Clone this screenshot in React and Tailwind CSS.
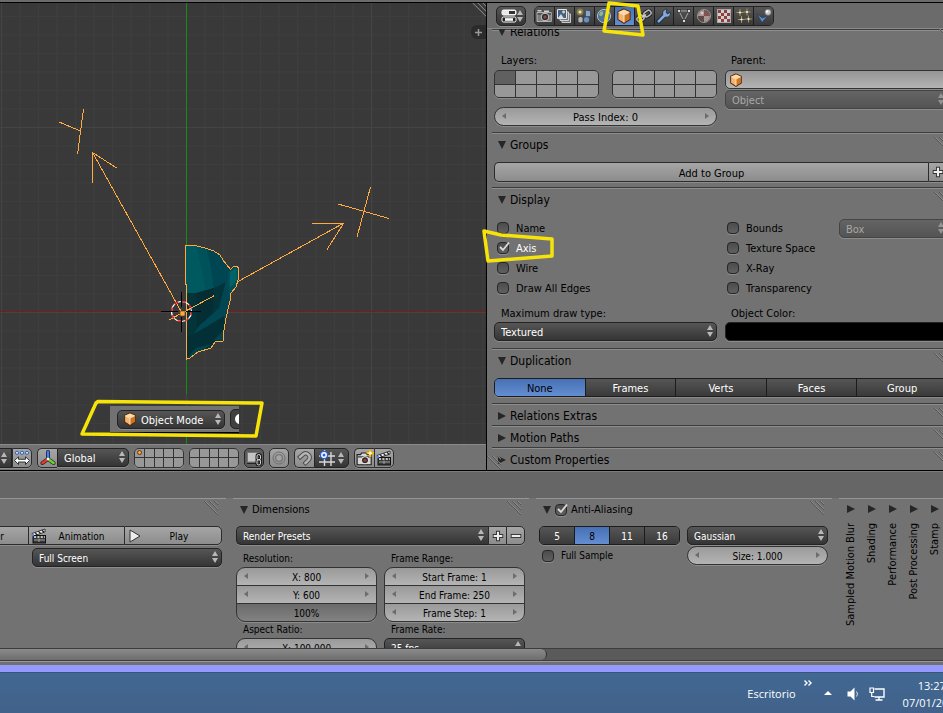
import React from 'react';
import clsx from 'clsx';

const DARK = 'bg-linear-to-b from-[#565656] to-[#353535] border-[#232323] text-white';
const LIGHT = 'bg-linear-to-b from-[#a6a6a6] to-[#8c8c8c] border-[#2c2c2c] text-black';
const EDGE = 'border shadow-[0_1px_0_#8c8c8c]';

/* ---------- icons ---------- */

function Svg({ children, className = 'size-4' }) {
  return (
    <svg viewBox="0 0 16 16" className={clsx('shrink-0', className)} fill="none" aria-hidden="true">
      {children}
    </svg>
  );
}

const Cube = ({ className }) => (
  <Svg className={className}>
    <path d="M8 1 14 3.8V11.5L8 15.2 2 11.5V3.8Z" fill="#e08a35" stroke="#4a2a10" strokeWidth="1.2" />
    <path d="M8 1.6 13.4 4.1 8 6.6 2.6 4.1Z" fill="#ffd9a6" />
    <path d="M2.6 4.4 8 7V14.5L2.6 11.2Z" fill="#f6b36c" />
    <path d="M13.4 4.4 8 7V14.5L13.4 11.2Z" fill="#cf7522" />
    <path d="M2.6 4.3 8 6.9 13.4 4.3M8 7V14.4" stroke="#fff0dc" strokeWidth=".9" />
  </Svg>
);

const CameraBack = () => (
  <Svg>
    <path d="M1 4.500H15.300V13.500H1Z" fill="#7d7d7d" stroke="#c4c4c4" strokeWidth=".8" />
    <path d="M1.500 2.800H5.500M8 3.200H13" stroke="#cfcfcf" strokeWidth="1.400" />
    <path d="M1.500 6H15" stroke="#333" />
    <circle cx="9" cy="9" r="3.8" fill="#2b2b2b" stroke="#c9c9c9" />
    <circle cx="9" cy="9" r="1.7" fill="#8c4a44" />
  </Svg>
);

const RenderLayers = () => (
  <Svg>
    <path d="M6 6H14.5V14.5H6Z" fill="#777" stroke="#c8c8c8" />
    <path d="M4 4H12.5V12.5H4Z" fill="#777" stroke="#d0d0d0" />
    <path d="M1.5 1.5H10.5V10.5H1.5Z" fill="#40608e" stroke="#e2e2e2" />
    <circle cx="7.6" cy="4" r="1.4" fill="#f0d878" />
    <path d="M2 10 5 6 7.5 10Z" fill="#d9d9d9" />
  </Svg>
);

const SceneIcon = () => (
  <Svg>
    <circle cx="4" cy="4" r="3.4" fill="#a99a4b" opacity=".6" />
    <circle cx="4" cy="4" r="1.6" fill="#efe6a0" />
    <path d="M9.500 2 14.5 3V8.500L9.500 9Z" fill="#8fa7c7" stroke="#31445f" strokeWidth=".7" />
    <circle cx="10.5" cy="11.800" r="3.2" fill="#6c8fbd" stroke="#22344e" strokeWidth=".7" />
    <path d="M2 9.500 4.500 8.500 7 9.500V14L4.500 15 2 14Z" fill="#b4b4b4" stroke="#333" strokeWidth=".7" />
  </Svg>
);

const WorldIcon = () => (
  <Svg>
    <circle cx="8" cy="8" r="6.6" fill="#4f7296" stroke="#a8bccb" />
    <path d="M4 4C7 2 8 5 6.5 7S4 8 3 7ZM9 8C12 7 13 9 11 12L8.5 12.5Z" fill="#93b38b" />
  </Svg>
);

const ChainIcon = () => (
  <Svg>
    <g transform="rotate(-35 8 8)">
      <g stroke="#1c1c1c" strokeWidth="3.4"><rect x="0" y="5.500" width="7.500" height="5" rx="2.5" /><rect x="8.500" y="5.500" width="7.500" height="5" rx="2.5" /></g>
      <g stroke="#b5b5b5" strokeWidth="1.6"><rect x="0" y="5.500" width="7.500" height="5" rx="2.5" /><rect x="8.500" y="5.500" width="7.500" height="5" rx="2.5" /></g>
      <path d="M5.500 8H10.500" stroke="#d0d0d0" strokeWidth="1.4" />
    </g>
  </Svg>
);

const WrenchIcon = () => (
  <Svg>
    <path d="M2.5 13.5 9 7" stroke="#1b2a40" strokeWidth="4.4" strokeLinecap="round" />
    <path d="M14.500 4.200A4 4 0 1 1 11 1.200L10 4.4 11.600 5.900Z" fill="#86a9d8" stroke="#1b2a40" strokeWidth=".8" />
    <path d="M2.7 13.3 9 7" stroke="#86a9d8" strokeWidth="2.6" strokeLinecap="round" />
  </Svg>
);

const MeshIcon = () => (
  <Svg>
    <path d="M3 3H13L8 13Z" stroke="#a6a6a6" />
    {[[3, 3], [13, 3], [8, 13]].map(([x, y]) => (
      <rect key={`${x}-${y}`} x={x - 1.5} y={y - 1.5} width="3" height="3" fill="#d9d9d9" stroke="#222" strokeWidth=".7" />
    ))}
  </Svg>
);

const MaterialIcon = () => (
  <Svg>
    <circle cx="8" cy="8" r="6.6" fill="#7d5450" stroke="#8e8e8e" />
    <path d="M8 8V2A6 6 0 0 0 2 8ZM8 8H14A6 6 0 0 1 8 14Z" fill="#a89693" />
    <path d="M8 8V14A6 6 0 0 1 2 8Z" fill="#5d4a48" />
    <circle cx="6" cy="5" r="1.5" fill="#ddd" opacity=".7" />
  </Svg>
);

const TextureIcon = () => (
  <Svg>
    <rect x="1.5" y="1.5" width="13" height="13" fill="#cfcfcf" stroke="#a8a8a8" />
    {[0, 1, 2, 3].map((r) =>
      [0, 1, 2, 3].map((c) =>
        (r + c) % 2 === 0 ? <rect key={`${r}${c}`} x={2 + c * 3} y={2 + r * 3} width="3" height="3" fill="#8f3f3b" /> : null
      )
    )}
  </Svg>
);

const ParticlesIcon = () => (
  <Svg>
    {[[4, 4.5], [11, 4], [5.5, 11.5], [12.5, 11]].map(([x, y]) => (
      <g key={`${x}-${y}`}>
        <path d={`M${x - 3.4} ${y}H${x + 3.4}M${x} ${y - 3.4}V${y + 3.4}`} stroke="#a89b5e" />
        <circle cx={x} cy={y} r="1.1" fill="#f5efd0" />
      </g>
    ))}
  </Svg>
);

const PhysicsIcon = () => (
  <Svg>
    <path d="M1 6 6 14.5 12 7.5 6.5 10Z" fill="#5f8cc8" stroke="#22395b" strokeWidth=".7" />
    <circle cx="12" cy="4.2" r="3.2" fill="#c8c8c8" stroke="#555" strokeWidth=".7" />
    <circle cx="11.100" cy="3.4" r="1.2" fill="#fff" />
  </Svg>
);

const EditorIcon = () => (
  <Svg>
    <rect x="1" y="2" width="14" height="5" rx="1.5" fill="#e8e8e8" stroke="#fff" />
    <rect x="8" y="3" width="6" height="3" fill="#333" />
    <rect x="1" y="9" width="14" height="5" rx="1.5" fill="#222" stroke="#fff" />
    <rect x="4" y="10.2" width="8" height="2.6" fill="#fff" />
  </Svg>
);

const ManipulatorIcon = () => (
  <Svg>
    <path d="M0.500 10.500 4.500 6.800V9.300H11.500V6.800L15.500 10.500 11.500 14.500V12H4.500V14.500Z" fill="#fff" stroke="#222" strokeWidth=".9" />
    {[3, 8, 13].map((x) => <circle key={x} cx={x} cy="2.800" r="1.6" fill="#cfe0ff" stroke="#2d5fb4" />)}
  </Svg>
);

const AxisIcon = () => (
  <Svg>
    <g strokeLinecap="round">
      <path d="M8 8.5V2M8 9 2.5 13M8 9 13.5 13" stroke="#222" strokeWidth="4" />
      <path d="M8 8.5V2" stroke="#3f7fff" strokeWidth="2.4" />
      <path d="M7.6 9.3 2.5 13" stroke="#e8382a" strokeWidth="2.6" />
      <path d="M8.4 9.3 13.5 13" stroke="#6fd42c" strokeWidth="2.6" />
    </g>
    <circle cx="8" cy="9" r="1.3" fill="#fff" />
  </Svg>
);

const LockIcon = () => (
  <Svg>
    <rect x="1.5" y="2.5" width="10.5" height="9.5" fill="#c4c4c4" stroke="#777" />
    <path d="M1 13.500H10" stroke="#222" />
    <rect x="11" y="4.5" width="3.500" height="5.500" rx="1.700" stroke="#1c1c1c" strokeWidth="3" />
    <rect x="11" y="9.500" width="3.500" height="5.500" rx="1.700" stroke="#1c1c1c" strokeWidth="3" />
    <rect x="11" y="4.5" width="3.500" height="5.500" rx="1.700" stroke="#ddd" />
    <rect x="11" y="9.500" width="3.500" height="5.500" rx="1.700" stroke="#ddd" />
  </Svg>
);

const ProportionalIcon = () => (
  <Svg>
    <circle cx="8" cy="8" r="6" stroke="#6f6f6f" />
    <circle cx="8" cy="8" r="3.4" fill="#a4a4a4" stroke="#777" strokeWidth="1.4" />
  </Svg>
);

const MagnetIcon = () => (
  <Svg>
    <path d="M1.500 8.500 6.500 4A4 4 0 0 1 12 9.500L7 14.500" stroke="#4d4d4d" strokeWidth="4.4" />
    <path d="M2.200 7.900 6.500 4A4 4 0 0 1 12 9.500L7.700 13.800" stroke="#b5b5b5" strokeWidth="2.4" />
  </Svg>
);

const SnapIcon = () => (
  <Svg>
    <path d="M0 6H16M0 12H16M5.5 0V16M12 2V16" stroke="#d8d8d8" strokeWidth="1.4" />
    <circle cx="5" cy="5" r="3.6" fill="#fff" stroke="#2c62d6" strokeWidth="1.4" />
    <circle cx="5" cy="5" r="1.5" fill="#2c62d6" />
  </Svg>
);

const RenderIcon = () => (
  <Svg className="size-[18px]">
    <path d="M1 5H4L5 3.6H9L10 5H13.5V14H1Z" fill="#d6d6d6" stroke="#1f1f1f" />
    <path d="M1.5 7H13" stroke="#555" strokeWidth="1.4" />
    <circle cx="8" cy="10" r="3.2" fill="#2b2b2b" stroke="#fff" strokeWidth=".8" />
    <circle cx="8" cy="10" r="1.4" fill="#a5392e" />
    <path d="M12.6 .4V7M9.3 3.7H16" stroke="#f5b400" strokeWidth="2" />
    <circle cx="12.6" cy="3.7" r="1.5" fill="#fff6c8" />
  </Svg>
);

const ClapperIcon = () => (
  <Svg>
    <path d="M1 5.5 14 1V4L2 8Z" fill="#f4f4f4" stroke="#1c1c1c" strokeWidth=".8" />
    <path d="M4 4.6 6 6.6M7.5 3.4 9.5 5.4M11 2.2 13 4.2" stroke="#1c1c1c" strokeWidth="1.3" />
    <rect x="2" y="7.5" width="12.5" height="7.5" fill="#3a3a3a" stroke="#111" />
    <path d="M3 9H14" stroke="#eee" strokeWidth="1.3" strokeDasharray="2 1.4" />
    <path d="M3 12H14M8 10.5V14" stroke="#aaa" strokeWidth=".9" />
    <circle cx="1.8" cy="7" r="1.3" fill="#4c86e8" />
  </Svg>
);

const PlusIcon = () => (
  <Svg className="size-3">
    <path d="M8 1V15M1 8H15" stroke="#333" strokeWidth="5.400" />
    <path d="M8 2.2V13.8M2.2 8H13.8" stroke="#ededed" strokeWidth="2.800" />
  </Svg>
);

const MinusIcon = () => (
  <Svg className="size-3">
    <path d="M1 8H15" stroke="#333" strokeWidth="5.400" />
    <path d="M2.2 8H13.8" stroke="#ededed" strokeWidth="2.800" />
  </Svg>
);

function Arrows({ className }) {
  return (
    <svg viewBox="0 0 6 12" className={clsx('pointer-events-none h-3 w-1.5 shrink-0', className)} aria-hidden="true">
      <path d="M3 0 6 5H0ZM3 12 6 7H0Z" fill="#b8b8b8" />
    </svg>
  );
}

function Hatch({ className }) {
  return (
    <svg viewBox="0 0 14 14" className={clsx('size-3.5 opacity-80', className)} aria-hidden="true">
      <path d="M0 0 14 14M5 0 14 9M10 0 14 4" stroke="#505050" />
      <path d="M1 0 14 13M6 0 14 8M11 0 14 3" stroke="#929292" />
    </svg>
  );
}

function Triangle({ open, className }) {
  return (
    <svg viewBox="0 0 8 8" className={clsx('size-2 shrink-0', className)} aria-hidden="true">
      <path d={open ? 'M0 0H8L4 8Z' : 'M0 0 8 4 0 8Z'} fill="#262626" />
    </svg>
  );
}

/* ---------- widgets ---------- */

function Menu({ label, value, icon, className, selectClass = 'pl-1.5', disabled }) {
  return (
    <div className={clsx('relative flex h-[19px]', className)}>
      {icon && <span className="pointer-events-none absolute inset-y-0 left-1.5 flex items-center">{icon}</span>}
      <select
        aria-label={label}
        disabled={disabled}
        className={clsx(
          'w-full appearance-none rounded-[5px] pt-0.5 pr-3 opacity-100',
          EDGE,
          disabled ? 'border-[#444] bg-linear-to-b from-[#646464] to-[#545454] text-[#a8a8a8]' : DARK,
          selectClass
        )}
      >
        <option>{value}</option>
      </select>
      <Arrows className={clsx('absolute top-[3px] right-1', disabled && 'opacity-60')} />
    </div>
  );
}

function NumberField({ label, value, className = 'rounded-full', shade = 'from-[#9a9a9a] to-[#b4b4b4]', arrows = true }) {
  return (
    <div className="relative flex h-[19px]">
      <input
        aria-label={label}
        defaultValue={value}
        className={clsx('w-full min-w-0 border border-[#333] bg-linear-to-b pt-0.5 text-center text-black shadow-[0_1px_0_#8c8c8c]', shade, className)}
      />
      {arrows && (
        <>
          <svg viewBox="0 0 4 6" className="pointer-events-none absolute top-1.5 left-2 h-1.5 w-1" aria-hidden="true"><path d="M4 0V6L0 3Z" fill="#6c6c6c" /></svg>
          <svg viewBox="0 0 4 6" className="pointer-events-none absolute top-1.5 right-2 h-1.5 w-1" aria-hidden="true"><path d="M0 0V6L4 3Z" fill="#6c6c6c" /></svg>
        </>
      )}
    </div>
  );
}

function Check({ label, checked, className }) {
  return (
    <label className={clsx('flex items-center', className)}>
      <span className="relative flex">
        <input
          type="checkbox"
          defaultChecked={checked}
          className="peer size-3 appearance-none rounded-[4px] border border-[#262626] bg-linear-to-b from-[#4c4c4c] to-[#606060] shadow-[0_1px_0_#8c8c8c]"
        />
        <svg viewBox="0 0 12 12" className="pointer-events-none absolute -top-px left-px hidden size-3 peer-checked:block" aria-hidden="true">
          <path d="M2 6 5 9 11 1.5" fill="none" stroke="#dcdcdc" strokeWidth="1.8" />
        </svg>
      </span>
      <span>{label}</span>
    </label>
  );
}

function Segments({ items, active, className }) {
  return (
    <div className={clsx('flex h-[19px] overflow-hidden rounded-[5px]', EDGE, 'border-[#1c1c1c]', className)}>
      {items.map((item) => (
        <button
          key={item}
          type="button"
          className={clsx(
            'flex-1 border-l border-[#1c1c1c] bg-linear-to-b pt-0.5 first:border-l-0',
            item === active ? 'from-[#4770b5] to-[#648ed2] text-black' : 'from-[#565656] to-[#3a3a3a] text-white'
          )}
        >
          {item}
        </button>
      ))}
    </div>
  );
}

function LayerGrid({ name, className, marked, icon }) {
  return (
    <div className={clsx('grid grid-cols-5 grid-rows-2 gap-px overflow-hidden rounded-[5px] border border-[#333] bg-[#333] shadow-[0_1px_0_#8c8c8c]', className)}>
      {Array.from({ length: 10 }, (_, i) => (
        <button
          key={i}
          type="button"
          aria-label={`${name} ${i + 1}`}
          className={clsx('flex items-center justify-center', marked && i === 0 ? 'bg-[#606060]' : 'bg-[#989898]')}
        >
          {icon && i === 0 && <span className="size-[5px] rounded-full border border-[#5d3410] bg-[#ffa64d]" />}
        </button>
      ))}
    </div>
  );
}

function Panel({ title, open, children, titleClass }) {
  return (
    <section className="border-t border-[#3c3c3c] shadow-[inset_0_1px_0_#8e8e8e]">
      <h2 className={clsx('relative flex items-center gap-1 pl-1.5 text-[12px]', open ? 'h-6' : 'h-[21px] pt-0.5', titleClass)}>
        <Triangle open={open} />
        {title}
        <Hatch className="absolute top-1 right-1" />
      </h2>
      {children}
    </section>
  );
}

/* ---------- 3D view ---------- */

const OUTLINE =
  'M185.500 246 195 245.500 205 248 213 250.500 220 255 223 260 226 264 230.500 269.500 233 267 236 266 239 268 238 280 236 287 231 293 230 301 226 318 224 330 223.500 341 215 342 211 348 198 352 190 358 186.500 359V285L185.500 284Z';

function Scene() {
  return (
    <svg className="absolute inset-0 size-full" role="img" aria-label="3D view">
      <defs>
        <pattern id="minor" x="1" y="13" width="18.500" height="18.500" patternUnits="userSpaceOnUse">
          <path d="M.5 0V18.500M0 .5H18.500" stroke="#3e3e3e" />
        </pattern>
        <pattern id="major" x="1" y="124" width="185" height="185" patternUnits="userSpaceOnUse">
          <path d="M.5 0V185M0 .5H185" stroke="#444" />
        </pattern>
        <clipPath id="mesh"><path d={OUTLINE} /></clipPath>
      </defs>
      <rect width="100%" height="100%" fill="url(#minor)" />
      <rect width="100%" height="100%" fill="url(#major)" />
      <g transform="translate(0 -3)">
        <path d="M0 311.500H2000" stroke="#7d1a1a" />
        <path d="M186.500 0V394M186.500 436V450" stroke="#109010" />
        <g clipPath="url(#mesh)">
          <path d="M184 240H245V362H184Z" fill="#033940" />
          <path d="M184 240H195L201 262 206 290 197 293H184Z" fill="#00595e" />
          <path d="M195 240H205L211 262 214 288 206 291 200 262Z" fill="#00525a" />
          <path d="M205 244 222 254 229 270 228 283 214 288 210 262Z" fill="#004552" />
          <path d="M186 293H200L214 288 228 281 226 300 205 328 187 340Z" fill="#03343a" />
          <path d="M196 293 214 288 212 320 197 330Z" fill="#042e34" />
          <path d="M229 268 233 290 226 318 222 318 208 326 192 336 200 325 219 308Z" fill="#014653" />
          <path d="M228 272 240 262V284L229 296Z" fill="#015059" />
          <path d="M230 272 236 268 237 280 230 288Z" fill="#016367" />
          <path d="M186 338 208 326 224 316V340L210 346 186 358Z" fill="#033036" />
          <path d="M214 340 224 330V341Z" fill="#014350" />
          <path d="M187 358 196 348 212 344 200 352Z" fill="#01454c" />
        </g>
        <g fill="none" stroke="#ffa940" shapeRendering="crispEdges">
          <path d={OUTLINE} />
          <path d="M182 313 92.500 152.500M92.500 183V152.500L117.500 168.500" />
          <path d="M59 122 80.500 131M83.500 109 77.500 154.500" />
          <path d="M169 320 214.500 295.500M238 281.500 343 223.500M312 223.500H343.500L327 249.500" />
          <path d="M370.500 187 357 237M338 204 389 218.500" />
        </g>
        <rect x="180" y="311" width="5" height="5" rx="1" fill="#ffa940" stroke="#5d3410" strokeWidth=".6" />
        <circle cx="181.500" cy="311.500" r="10" fill="none" stroke="#fff" strokeWidth="1.200" />
        <circle cx="181.500" cy="311.500" r="10" fill="none" stroke="#f00" strokeWidth="1.200" strokeDasharray="3.930 3.930" />
        <path d="M161 311.500H178M186 311.500H201M181.500 292V307M181.500 317V332" stroke="#000" />
      </g>
    </svg>
  );
}

function Viewport() {
  return (
    <main className="relative flex min-w-0 flex-1 flex-col border-r border-black">
      <div className="relative min-h-[441px] flex-1 overflow-hidden bg-[#393939]">
        <Scene />
        <Hatch className="absolute top-0 right-0" />
        <button type="button" aria-label="Open shelf" className="absolute top-[22px] right-0 flex h-3.5 w-[15px] items-center justify-center rounded-l-md bg-[#2b2b2b]">
          <svg viewBox="0 0 7 7" className="size-[7px]" aria-hidden="true"><path d="M3.500 0V7M0 3.500H7" stroke="#999" strokeWidth="1.500" /></svg>
        </button>
        <div className="absolute top-[403px] left-[110px] flex h-[27px] w-[129px] items-center gap-[5px] overflow-hidden border-b border-black bg-[#727272] pl-[7px]">
          <Menu label="Mode" value="Object Mode" icon={<Cube className="size-3.5" />} className="h-5 w-[108px] shrink-0" selectClass="pl-[23px]" />
          <span className="flex h-5 w-5 shrink-0 items-center rounded-[5px] border border-[#232323] bg-[#404040] pl-1">
            <span className="size-2.5 shrink-0 rounded-full bg-white" />
          </span>
        </div>
        <svg className="absolute inset-0 size-full" aria-hidden="true">
          <path d="M98 398.500 262 400 256 433 82 431 96 400Z" fill="none" stroke="#f5e30a" strokeWidth="3.500" strokeLinejoin="round" />
        </svg>
      </div>
      <div className="flex h-[26px] items-center gap-[5px] overflow-hidden border-t border-[#8a8a8a] bg-[#727272]">
        <div className="-ml-2 flex h-5">
          <button type="button" aria-label="Pivot" className={clsx('flex w-5 items-center justify-end pr-1', EDGE, DARK)}><Arrows /></button>
          <button type="button" aria-label="Manipulate centers" className={clsx('flex w-5 items-center justify-center rounded-r-[5px]', EDGE, LIGHT)}><ManipulatorIcon /></button>
        </div>
        <div className="flex h-5">
          <button type="button" aria-label="Manipulator" className={clsx('flex w-5 items-center justify-center rounded-l-[5px] border-r-0', EDGE, LIGHT)}><AxisIcon /></button>
          <Menu label="Orientation" value="Global" className="h-5 w-[72px]" selectClass="rounded-l-none pl-1.5" />
        </div>
        <LayerGrid name="Scene layer" className="h-5 w-[50px]" icon />
        <LayerGrid name="Extra scene layer" className="h-5 w-[50px]" />
        <button type="button" aria-label="Lock camera and layers" className={clsx('flex h-5 w-5 items-center justify-center rounded-[5px] bg-[#5c5c5c]', EDGE, 'border-[#232323]')}><LockIcon /></button>
        <button type="button" aria-label="Proportional editing" className={clsx('flex h-5 w-5 items-center justify-center rounded-[5px]', EDGE, LIGHT)}><ProportionalIcon /></button>
        <div className="flex h-5">
          <button type="button" aria-label="Snap" className={clsx('flex w-5 items-center justify-center rounded-l-[5px] border-r-0', EDGE, LIGHT)}><MagnetIcon /></button>
          <button type="button" aria-label="Snap element" className={clsx('flex w-[35px] items-center justify-between rounded-r-[5px] px-1', EDGE, DARK)}><SnapIcon /><Arrows /></button>
        </div>
        <div className="flex h-5">
          <button type="button" aria-label="Render image" className={clsx('flex w-5 items-center justify-center rounded-l-[5px] border-r-0', EDGE, LIGHT)}><RenderIcon /></button>
          <button type="button" aria-label="Render animation" className={clsx('flex w-5 items-center justify-center rounded-r-[5px]', EDGE, LIGHT)}><ClapperIcon /></button>
        </div>
      </div>
    </main>
  );
}

/* ---------- properties editor ---------- */

const TABS = [
  ['Render', CameraBack],
  ['Render layers', RenderLayers],
  ['Scene', SceneIcon],
  ['World', WorldIcon],
  ['Object', Cube],
  ['Constraints', ChainIcon],
  ['Modifiers', WrenchIcon],
  ['Data', MeshIcon],
  ['Material', MaterialIcon],
  ['Texture', TextureIcon],
  ['Particles', ParticlesIcon],
  ['Physics', PhysicsIcon],
];

function Properties() {
  return (
    <aside className="relative w-[456px] shrink-0">
      <div className="flex h-full flex-col overflow-hidden bg-[#727272]">
        <header className="z-10 flex h-[26px] shrink-0 items-center gap-2 border-b border-[#8a8a8a] bg-[#6b6b6b] pl-[9px]">
          <button type="button" aria-label="Editor type" className={clsx('flex h-5 w-[30px] items-center justify-between rounded-[5px] px-1', EDGE, DARK)}>
            <EditorIcon />
            <Arrows />
          </button>
          <nav className="flex h-5 w-60 overflow-hidden rounded-[5px] border border-[#232323]">
            {TABS.map(([name, Icon]) => (
              <button
                key={name}
                type="button"
                aria-label={name}
                className={clsx(
                  'flex flex-1 items-center justify-center border-l border-[#1c1c1c] bg-linear-to-b first:border-l-0',
                  name === 'Object' ? 'from-[#4770b5] to-[#648ed2]' : 'from-[#565656] to-[#3a3a3a]'
                )}
              >
                <Icon />
              </button>
            ))}
          </nav>
        </header>

        <div className="w-[465px] pl-[5px]">
          <Panel title="Relations" open titleClass="-mt-[10px]">
            <div className="grid w-[458px] grid-cols-2 gap-2 px-0.5 pt-[7px] pb-1.5">
              <div>
                <div className="flex h-[19px] items-center pl-[7px]">Layers:</div>
                <div className="flex justify-between">
                  <LayerGrid name="Layer" className="h-7 w-[105px]" marked />
                  <LayerGrid name="Extra layer" className="h-7 w-[105px]" />
                </div>
                <div className="pt-[9px]"><NumberField label="Pass Index" value="Pass Index: 0" /></div>
              </div>
              <div>
                <label htmlFor="parent" className="flex h-[19px] items-center pl-1.5">Parent:</label>
                <div className="relative mb-px flex h-[19px]">
                  <span className="pointer-events-none absolute inset-y-0 left-1 flex items-center"><Cube className="size-3.5" /></span>
                  <input id="parent" className={clsx('w-full rounded-[5px] border-[#333] bg-linear-to-b from-[#959595] to-[#b4b4b4] pl-6', EDGE)} />
                </div>
                <Menu label="Parent type" value="Object" disabled />
              </div>
            </div>
          </Panel>

          <Panel title="Groups" open>
            <div className="flex h-[30px] w-[458px] px-0.5 py-[5px]">
              <button type="button" className={clsx('flex-1 rounded-l-[5px] border-r-0 pt-0.5', EDGE, LIGHT)}>Add to Group</button>
              <button type="button" aria-label="New group" className={clsx('flex w-5 items-center justify-center rounded-r-[5px]', EDGE, LIGHT)}><PlusIcon /></button>
            </div>
          </Panel>

          <Panel title="Display" open>
            <div className="grid w-[458px] grid-cols-2 gap-x-2 px-0.5 pt-1.5 pb-[7px]">
              <div className="flex flex-col pl-[3px]">
                <Check className="h-5 gap-[7px]" label="Name" />
                <Check className="h-5 gap-[7px] text-white" label="Axis" checked />
                <Check className="h-5 gap-[7px]" label="Wire" />
                <Check className="h-5 gap-[7px]" label="Draw All Edges" />
              </div>
              <div className="flex flex-col pl-0.5">
                <div className="flex h-5 items-center justify-between">
                  <Check className="gap-[7px]" label="Bounds" />
                  <Menu label="Bounds type" value="Box" className="w-[109px]" disabled />
                </div>
                <Check className="h-5 gap-[7px]" label="Texture Space" />
                <Check className="h-5 gap-[7px]" label="X-Ray" />
                <Check className="h-5 gap-[7px]" label="Transparency" />
              </div>
              <div className="pt-1.5">
                <div className="flex h-[18px] items-center pl-[7px]">Maximum draw type:</div>
                <Menu label="Maximum draw type" value="Textured" />
              </div>
              <div className="pt-1.5">
                <div className="flex h-[18px] items-center pl-1.5">Object Color:</div>
                <button type="button" aria-label="Object Color" className={clsx('block h-[19px] w-full rounded-[5px] border-[#232323] bg-black', EDGE)} />
              </div>
            </div>
          </Panel>

          <Panel title="Duplication" open>
            <div className="w-[458px] px-0.5 pt-[5px] pb-1.5">
              <Segments items={['None', 'Frames', 'Verts', 'Faces', 'Group']} active="None" />
            </div>
          </Panel>
          <Panel title="Relations Extras" />
          <Panel title="Motion Paths" />
          <Panel title="Custom Properties" />
        </div>
      </div>
      <Hatch className="absolute bottom-0 left-0 -scale-x-100 rotate-90" />
      <svg className="pointer-events-none absolute inset-0 z-20 size-full overflow-visible" aria-hidden="true">
        <g fill="none" stroke="#f5e30a" strokeWidth="3.500" strokeLinejoin="round">
          <path d="M122 0 151 3 156 32 117 28Z" />
          <path d="M-3 228 14 232 65 236V253L1 258Z" />
        </g>
      </svg>
    </aside>
  );
}

/* ---------- render settings strip ---------- */

function BottomPanel({ title, children }) {
  return (
    <section className="w-[296px] shrink-0 border-t border-[#969696] pr-1 pl-[3px]">
      <h2 className="relative flex h-[21px] items-center gap-1 pl-1 text-[11px]">
        {title && <Triangle open />}
        {title}
        <Hatch className="absolute top-0.5 right-1" />
      </h2>
      <div className="pt-1.5">{children}</div>
    </section>
  );
}

const COLLAPSED = ['Sampled Motion Blur', 'Shading', 'Performance', 'Post Processing', 'Stamp'];

function RenderSettings() {
  return (
    <div className="flex h-[150px] gap-[7px] overflow-hidden bg-[#727272] text-[10px]">
      <div className="-ml-[70px] flex gap-[7px]">
        <BottomPanel>
          <div className="flex h-[19px]">
            <button type="button" className={clsx('flex w-[95px] items-center rounded-l-[5px] border-r-0 pt-0.5 pr-2 pl-1', EDGE, LIGHT)}>
              <RenderIcon /><span className="flex-1">Render</span>
            </button>
            <button type="button" className={clsx('flex w-24 items-center border-r-0 pl-0.5', EDGE, LIGHT)}>
              <ClapperIcon /><span className="flex-1 pt-0.5 pr-2">Animation</span>
            </button>
            <button type="button" className={clsx('flex flex-1 items-center rounded-r-[5px] pl-1', EDGE, LIGHT)}>
              <svg viewBox="0 0 12 14" className="h-3.5 w-3" aria-hidden="true"><path d="M1 1 11 7 1 13Z" fill="#eee" stroke="#333" /></svg>
              <span className="flex-1 pt-0.5 pr-1">Play</span>
            </button>
          </div>
          <div className="pt-[3px] pl-[99px]">
            <Menu label="Display" value="Full Screen" />
          </div>
        </BottomPanel>

        <BottomPanel title="Dimensions">
          <div className="flex h-[19px]">
            <Menu label="Render presets" value="Render Presets" className="flex-1" selectClass="rounded-r-none border-r-0 pl-1.5" />
            <button type="button" aria-label="Add preset" className={clsx('flex w-[18px] items-center justify-center border-r-0', EDGE, LIGHT)}><PlusIcon /></button>
            <button type="button" aria-label="Remove preset" className={clsx('flex w-[19px] items-center justify-center rounded-r-[5px]', EDGE, LIGHT)}><MinusIcon /></button>
          </div>
          <div className="grid grid-cols-2 gap-[7px] pt-1">
            <div>
              <div className="flex h-[18px] items-center pt-0.5 pl-[7px]">Resolution:</div>
              <div className="flex flex-col -space-y-px">
                <NumberField label="Resolution X" value="X: 800" className="rounded-t-[9px]" />
                <NumberField label="Resolution Y" value="Y: 600" className="" />
                <NumberField label="Resolution percentage" value="100%" className="rounded-b-[9px]" shade="from-[#6a6a6a] to-[#828282]" arrows={false} />
              </div>
              <div className="flex h-4 items-center pl-[7px]">Aspect Ratio:</div>
              <NumberField label="Aspect X" value="X: 100.000" className="rounded-t-[9px]" />
            </div>
            <div>
              <div className="flex h-[18px] items-center pt-0.5 pl-[7px]">Frame Range:</div>
              <div className="flex flex-col -space-y-px">
                <NumberField label="Start Frame" value="Start Frame: 1" className="rounded-t-[9px]" />
                <NumberField label="End Frame" value="End Frame: 250" className="" />
                <NumberField label="Frame Step" value="Frame Step: 1" className="rounded-b-[9px]" />
              </div>
              <div className="flex h-4 items-center pl-[7px]">Frame Rate:</div>
              <Menu label="Frame Rate" value="25 fps" />
            </div>
          </div>
        </BottomPanel>

        <BottomPanel title={<Check label="Anti-Aliasing" checked className="gap-1" />}>
          <div className="grid grid-cols-2 gap-[7px]">
            <div>
              <Segments items={['5', '8', '11', '16']} active="8" />
              <Check className="h-[22px] gap-[7px] pl-[3px]" label="Full Sample" />
            </div>
            <div className="flex flex-col gap-px">
              <Menu label="Filter" value="Gaussian" />
              <NumberField label="Filter size" value="Size: 1.000" />
            </div>
          </div>
        </BottomPanel>
      </div>

      <div className="flex flex-1 border-t border-[#969696] pl-px text-[11px]">
        {COLLAPSED.map((title) => (
          <h2 key={title} className="flex w-[21px] shrink-0 flex-col items-center gap-2.5 pt-1.5 whitespace-nowrap">
            <Triangle />
            <span className="rotate-180 [writing-mode:vertical-rl]">{title}</span>
          </h2>
        ))}
      </div>
    </div>
  );
}

function Taskbar() {
  return (
    <footer className="flex h-[41px] items-center justify-end overflow-hidden border-t border-[#35557b] bg-linear-to-b from-[#416992] to-[#41618a] font-['Open_Sans',sans-serif] text-[11px] leading-[17px] text-white">
      <span>Escritorio</span>
      <button type="button" aria-label="More" className="mb-5 ml-2">
        <svg viewBox="0 0 8 6" className="h-1.5 w-2" aria-hidden="true"><path d="M.5 .5 3 3 .5 5.500M4.500 .5 7 3 4.500 5.500" fill="none" stroke="#fff" strokeWidth="1.400" /></svg>
      </button>
      <button type="button" aria-label="Hidden icons" className="ml-3">
        <svg viewBox="0 0 8 4" className="h-1 w-2" aria-hidden="true"><path d="M4 0 8 4H0Z" fill="#fff" /></svg>
      </button>
      <svg viewBox="0 0 14 14" className="mt-0.5 ml-[15px] size-3.5" fill="none" aria-label="Volume">
        <path d="M.5 4.500H3.500L7.500 .5V13.500L3.500 9.500H.5Z" fill="#fff" />
        <path d="M9.500 4.500Q11.500 7 9.500 9.500" stroke="#fff" strokeOpacity=".8" />
      </svg>
      <svg viewBox="0 0 16 14" className="mt-0.5 ml-2 h-3.5 w-4" fill="none" aria-label="Network">
        <path d="M5.500 2H15V10H5.500M10 10V12.500M6.500 13H13.500" stroke="#fff" strokeWidth="1.400" />
        <path d="M1 1H4.500V5.500H1ZM2.700 5.500V9.500H5.500" stroke="#fff" strokeWidth="1.200" />
      </svg>
      <time className="-mr-[18px] ml-[18px] pt-0.5 text-center">
        <div>13:27</div>
        <div>07/01/2013</div>
      </time>
    </footer>
  );
}

export default function App() {
  return (
    <div className="flex min-h-screen flex-col overflow-hidden bg-[#6b6b6b] font-['DejaVu_Sans_Condensed','DejaVu_Sans',sans-serif] text-[11px] leading-none text-black">
      <div className="mt-0.5 flex flex-1 border-y border-black">
        <Viewport />
        <Properties />
      </div>
      <div className="h-[27px] shrink-0 border-t border-[#7d7d7d] bg-[#666]" />
      <RenderSettings />
      <div className="flex h-[13px] shrink-0 border-y border-[#3c3c3c] bg-[#5a5a5a]">
        <div className="w-[58%] rounded-r-full border-r border-[#333] bg-linear-to-b from-[#8a8a8a] to-[#6e6e6e]" />
      </div>
      <div className="h-1 shrink-0 border-t border-[#999] bg-[#707070]" />
      <div className="h-[7px] shrink-0 bg-[#9699ff]" />
      <Taskbar />
    </div>
  );
}
